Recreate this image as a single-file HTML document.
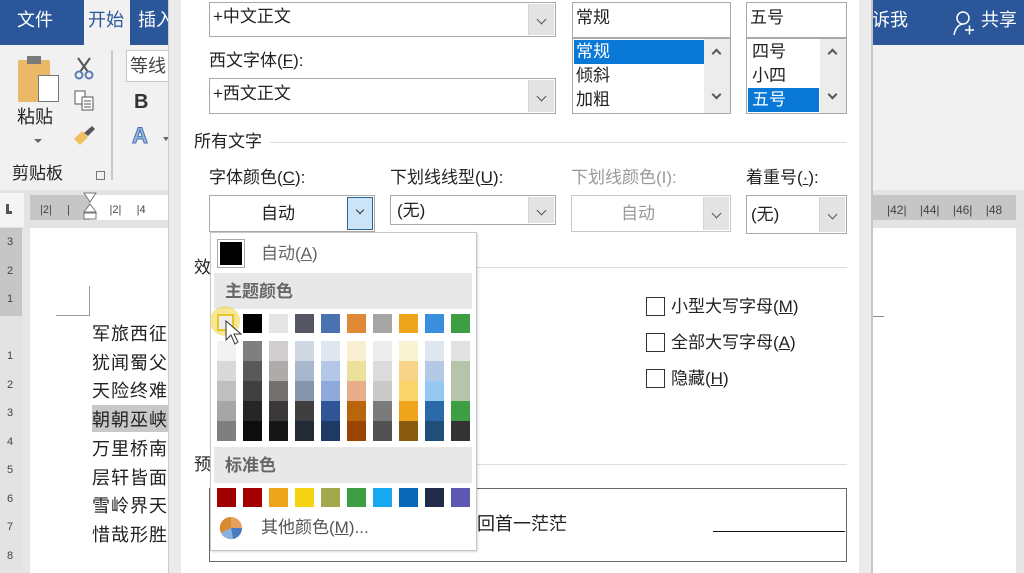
<!DOCTYPE html>
<html><head><meta charset="utf-8"><style>
*{margin:0;padding:0;box-sizing:border-box}
body{width:1024px;height:573px;overflow:hidden;position:relative;background:#e6e6e6;font-family:"Liberation Sans","Noto Sans CJK SC",sans-serif;color:#222}
.a{position:absolute}
.t{position:absolute;font-size:17px;line-height:20px;white-space:nowrap}
.box{position:absolute;background:#fff;border:1px solid #a9a9a9}
.dd{position:absolute;top:1px;bottom:1px;right:1px;width:26px;background:#e3e3e3;border-left:1px solid #d4d4d4}
.dd:after{content:"";position:absolute;left:9px;top:40%;width:6px;height:6px;border-right:1px solid #555;border-bottom:1px solid #555;transform:rotate(45deg)}
.sw{position:absolute;width:19px;height:19px}
.up{position:absolute;width:7px;height:7px;border-left:2px solid #555;border-top:2px solid #555;transform:rotate(45deg)}
.dn{position:absolute;width:7px;height:7px;border-right:2px solid #555;border-bottom:2px solid #555;transform:rotate(45deg)}
u{text-decoration:underline}
</style></head><body>
<!-- ribbon -->
<div class="a" style="left:0;top:0;width:1024px;height:45px;background:#2b579a"></div>
<div class="a" style="left:84px;top:0;width:46px;height:45px;background:#f1f1f1"></div>
<div class="t" style="left:17px;top:10px;color:#fff;font-size:18px">文件</div>
<div class="t" style="left:88px;top:10px;color:#2b579a;font-size:18px">开始</div>
<div class="t" style="left:138px;top:10px;color:#fff;font-size:18px">插入</div>
<div class="t" style="left:872px;top:10px;color:#fff;font-size:18px">诉我</div>
<svg class="a" style="left:952px;top:10px" width="24" height="26"><circle cx="11" cy="8" r="6" fill="none" stroke="#fff" stroke-width="1.5"/><path d="M2 25 Q4 15 11 14" fill="none" stroke="#fff" stroke-width="1.5"/><path d="M13 20h9M17.5 15.5v9" stroke="#fff" stroke-width="1.5"/></svg>
<div class="t" style="left:981px;top:10px;color:#fff;font-size:18px">共享</div>
<div class="a" style="left:0;top:45px;width:1024px;height:145px;background:#f1f1f1"></div>
<div class="a" style="left:18px;top:60px;width:32px;height:42px;background:#eab968;border-radius:2px"></div>
<div class="a" style="left:27px;top:56px;width:14px;height:8px;background:#7a7a7a"></div>
<div class="a" style="left:38px;top:75px;width:21px;height:27px;background:#fff;border:1px solid #777"></div>
<div class="t" style="left:17px;top:107px;font-size:18px">粘贴</div>
<div class="a" style="left:34px;top:139px;border:4px solid transparent;border-top:4px solid #666"></div>
<div class="t" style="left:12px;top:164px;font-size:17px">剪贴板</div>
<div class="a" style="left:96px;top:171px;width:9px;height:9px;border:1px solid #777"></div>
<svg class="a" style="left:73px;top:56px" width="22" height="24"><path d="M5 2 L15 16 M17 2 L7 16" stroke="#555" stroke-width="2"/><circle cx="6" cy="19" r="3.5" fill="none" stroke="#5a7db5" stroke-width="2"/><circle cx="16" cy="19" r="3.5" fill="none" stroke="#5a7db5" stroke-width="2"/></svg>
<svg class="a" style="left:74px;top:90px" width="22" height="22"><rect x="1" y="1" width="10" height="13" fill="#fff" stroke="#555"/><rect x="8" y="7" width="11" height="13" fill="#fff" stroke="#555"/><path d="M10 11h7M10 14h7M10 17h7" stroke="#555"/></svg>
<svg class="a" style="left:72px;top:125px" width="24" height="22"><path d="M2 14 L10 6 L16 12 L8 20Z" fill="#f0c060"/><path d="M12 8 L20 1 L23 4 L16 11Z" fill="#555"/></svg>
<div class="a" style="left:111px;top:50px;width:2px;height:130px;background:#c8c8c8"></div>
<div class="a" style="left:126px;top:50px;width:50px;height:32px;background:#fff;border:1px solid #c6c6c6"></div>
<div class="t" style="left:130px;top:56px;font-size:18px;color:#444">等线</div>
<div class="t" style="left:134px;top:92px;font-size:20px;font-weight:bold;color:#333">B</div>
<div class="t" style="left:132px;top:126px;font-size:22px;font-weight:bold;color:#9ab8e0;-webkit-text-stroke:1px #4a72b0">A</div>
<div class="a" style="left:163px;top:137px;border:3px solid transparent;border-top:4px solid #666"></div>
<!-- ruler area -->
<div class="a" style="left:0;top:190px;width:1024px;height:40px;background:#e3e3e3"></div>
<div class="a" style="left:0;top:193px;width:24px;height:34px;background:#f4f4f4"></div>
<div class="a" style="left:6px;top:204px;width:6px;height:10px;border-left:3px solid #555;border-bottom:3px solid #555"></div>
<div class="a" style="left:30px;top:195px;width:60px;height:25px;background:#c6c6c6"></div>
<div class="a" style="left:90px;top:195px;width:80px;height:25px;background:#fff"></div>
<div class="t" style="left:40px;top:200px;font-size:11px;color:#444">|2|&nbsp;&nbsp;&nbsp;&nbsp;&nbsp;|&nbsp;&nbsp;&nbsp;&nbsp;&nbsp;&nbsp;|&nbsp;&nbsp;&nbsp;&nbsp;&nbsp;&nbsp;|2|&nbsp;&nbsp;&nbsp;&nbsp;&nbsp;|4</div>
<svg class="a" style="left:83px;top:192px" width="14" height="36"><path d="M1 1h12L7 10Z M7 12 L13 20 H1Z" fill="#fff" stroke="#777"/><rect x="1" y="21" width="12" height="6" fill="#fff" stroke="#777"/></svg>
<div class="a" style="left:872px;top:195px;width:144px;height:25px;background:#c6c6c6"></div>
<div class="t" style="left:887px;top:200px;font-size:12px;color:#444">|42|&nbsp;&nbsp;&nbsp;&nbsp;|44|&nbsp;&nbsp;&nbsp;&nbsp;|46|&nbsp;&nbsp;&nbsp;&nbsp;|48</div>
<!-- left vertical ruler -->
<div class="a" style="left:0;top:228px;width:22px;height:345px;background:#e3e3e3"></div>
<div class="a" style="left:0;top:228px;width:22px;height:88px;background:#c6c6c6"></div>
<div class="a" style="left:3px;top:228px;font-size:11px;color:#444;line-height:28.5px;width:14px;text-align:center">3<br>2<br>1<br><br>1<br>2<br>3<br>4<br>5<br>6<br>7<br>8</div>
<!-- document page -->
<div class="a" style="left:30px;top:228px;width:140px;height:345px;background:#fff"></div>
<div class="a" style="left:56px;top:286px;width:34px;height:30px;border-right:1px solid #999;border-bottom:1px solid #999"></div>
<div class="a" style="left:92px;top:405px;width:76px;height:27px;background:#c8c8c8"></div>
<div class="a" style="left:92px;top:320px;font-size:18px;line-height:28.7px;color:#222;letter-spacing:1px">军旅西征<br>犹闻蜀父<br>天险终难<br>朝朝巫峡<br>万里桥南<br>层轩皆面<br>雪岭界天<br>惜哉形胜</div>
<div class="a" style="left:872px;top:228px;width:144px;height:345px;background:#fff"></div>
<div class="a" style="left:872px;top:316px;width:12px;height:1px;background:#888"></div>
<!-- dialog -->
<div class="a" style="left:168px;top:0;width:13px;height:573px;background:#ebebeb;border-left:1px solid #ccc"></div>
<div class="a" style="left:181px;top:0;width:678px;height:573px;background:#fff"></div>
<div class="a" style="left:859px;top:0;width:14px;height:573px;background:#ebebeb;border-right:2px solid #c6c6c6"></div>

<div class="box" style="left:209px;top:2px;width:347px;height:35px"><div class="dd"></div></div>
<div class="t" style="left:213px;top:7px">+中文正文</div>
<div class="t" style="left:209px;top:51px">西文字体(<u>F</u>):</div>
<div class="box" style="left:209px;top:78px;width:347px;height:36px"><div class="dd"></div></div>
<div class="t" style="left:213px;top:84px">+西文正文</div>

<div class="box" style="left:572px;top:2px;width:159px;height:36px"></div>
<div class="t" style="left:576px;top:8px">常规</div>
<div class="box" style="left:572px;top:38px;width:159px;height:76px"></div>
<div class="a" style="left:704px;top:39px;width:26px;height:74px;background:#ececec"></div>
<div class="a" style="left:574px;top:40px;width:130px;height:24px;background:#0a78d7"></div>
<div class="t" style="left:576px;top:42px;color:#fff">常规</div>
<div class="t" style="left:576px;top:66px">倾斜</div>
<div class="t" style="left:576px;top:90px">加粗</div>
<div class="up" style="left:713px;top:50px"></div>
<div class="dn" style="left:713px;top:91px"></div>

<div class="box" style="left:746px;top:2px;width:101px;height:36px"></div>
<div class="t" style="left:750px;top:8px">五号</div>
<div class="box" style="left:746px;top:38px;width:101px;height:76px"></div>
<div class="a" style="left:820px;top:39px;width:26px;height:74px;background:#ececec"></div>
<div class="a" style="left:748px;top:88px;width:71px;height:24px;background:#0a78d7"></div>
<div class="t" style="left:752px;top:42px">四号</div>
<div class="t" style="left:752px;top:66px">小四</div>
<div class="t" style="left:752px;top:90px;color:#fff">五号</div>
<div class="up" style="left:829px;top:50px"></div>
<div class="dn" style="left:829px;top:91px"></div>

<div class="t" style="left:194px;top:132px">所有文字</div>
<div class="a" style="left:270px;top:142px;width:577px;height:1px;background:#ddd"></div>
<div class="t" style="left:209px;top:168px">字体颜色(<u>C</u>):</div>
<div class="t" style="left:390px;top:168px">下划线线型(<u>U</u>):</div>
<div class="t" style="left:571px;top:168px;color:#999">下划线颜色(I):</div>
<div class="t" style="left:746px;top:168px">着重号(<u>·</u>):</div>

<div class="box" style="left:209px;top:195px;width:166px;height:37px"></div>
<div class="t" style="left:261px;top:204px">自动</div>
<div class="a" style="left:347px;top:197px;width:26px;height:33px;background:#cce4f7;border:1px solid #2c628b"></div>
<div class="a" style="left:357px;top:207px;width:6px;height:6px;border-right:1px solid #333;border-bottom:1px solid #333;transform:rotate(45deg)"></div>
<div class="box" style="left:390px;top:195px;width:166px;height:30px"><div class="dd"></div></div>
<div class="t" style="left:397px;top:201px">(无)</div>
<div class="box" style="left:571px;top:195px;width:160px;height:37px;border-color:#c8c8c8"><div class="dd"></div></div>
<div class="t" style="left:621px;top:204px;color:#999">自动</div>
<div class="box" style="left:746px;top:195px;width:101px;height:39px"><div class="dd"></div></div>
<div class="t" style="left:751px;top:205px">(无)</div>

<div class="t" style="left:194px;top:258px">效</div>
<div class="a" style="left:476px;top:267px;width:371px;height:1px;background:#ddd"></div>
<div class="a" style="left:646px;top:297px;width:19px;height:19px;border:1px solid #333"></div>
<div class="t" style="left:671px;top:297px">小型大写字母(<u>M</u>)</div>
<div class="a" style="left:646px;top:333px;width:19px;height:19px;border:1px solid #333"></div>
<div class="t" style="left:671px;top:333px">全部大写字母(<u>A</u>)</div>
<div class="a" style="left:646px;top:369px;width:19px;height:19px;border:1px solid #333"></div>
<div class="t" style="left:671px;top:369px">隐藏(<u>H</u>)</div>

<div class="t" style="left:194px;top:455px">预</div>
<div class="a" style="left:476px;top:464px;width:371px;height:1px;background:#ddd"></div>
<div class="a" style="left:209px;top:488px;width:638px;height:74px;border:1px solid #666;background:#fff"></div>
<div class="t" style="left:477px;top:514px;font-size:18px">回首一茫茫</div>
<div class="a" style="left:713px;top:531px;width:132px;height:1px;background:#111"></div>

<!-- color popup -->
<div class="a" style="left:210px;top:232px;width:267px;height:319px;background:#fff;border:1px solid #c6c6c6;box-shadow:1px 1px 2px rgba(0,0,0,.15)"></div>
<div class="a" style="left:217px;top:239px;width:28px;height:29px;border:1px solid #aaa;background:#fff"></div>
<div class="a" style="left:220px;top:242px;width:22px;height:23px;background:#000"></div>
<div class="t" style="left:261px;top:244px;color:#666">自动(<u>A</u>)</div>
<div class="a" style="left:214px;top:273px;width:258px;height:36px;background:#e8e8e8"></div>
<div class="t" style="left:225px;top:282px;font-weight:bold;color:#666">主题颜色</div>
<div class="a" style="left:214px;top:447px;width:258px;height:36px;background:#e8e8e8"></div>
<div class="t" style="left:225px;top:456px;font-weight:bold;color:#666">标准色</div>
<div id="g"></div>
<div class="a" style="left:210px;top:306px;width:30px;height:30px;border-radius:50%;background:rgba(240,215,80,.6)"></div>
<div class="a" style="left:217px;top:314px;width:17px;height:17px;border:2px solid #e8c820;background:#eee"></div>
<svg class="a" style="left:225px;top:320px" width="20" height="30"><path d="M1 1 L1 20 L6 15 L10 24 L13 22 L9 14 L16 14 Z" fill="#fff" stroke="#333"/></svg>
<svg class="a" style="left:219px;top:516px" width="24" height="24"><path d="M12 12 L12 1 A11 11 0 0 1 23 12Z" fill="#e8a060"/><path d="M12 12 L23 12 A11 11 0 0 1 14 23Z" fill="#4a7ac0"/><path d="M12 12 L14 23 A11 11 0 0 1 2 17Z" fill="#8ab0e0"/><path d="M12 12 L2 17 A11 11 0 0 1 12 1Z" fill="#d88a30"/></svg>
<div class="t" style="left:261px;top:518px;color:#555">其他颜色(<u>M</u>)...</div>
<script>
var tc=["#f4f4f4","#000000","#e5e5e5","#545763","#4a72b0","#e08a37","#a5a5a5","#eea41b","#3a8ede","#3e9e43"];
var sh=[["#f2f2f2","#d9d9d9","#bfbfbf","#a6a6a6","#7f7f7f"],["#7f7f7f","#595959","#404040","#262626","#0d0d0d"],["#d0cece","#aeabab","#757070","#3a3838","#171616"],["#d0d8e4","#a8b7cc","#8595ab","#3f3f3f","#222a35"],["#dde6f1","#b4c7e7","#8eaadb","#2f5597","#1f3864"],["#f8f0d0","#ebe19a","#e8ad8a","#b8650c","#9a4400"],["#ededed","#dbdbdb","#c9c9c9","#7b7b7b","#525252"],["#f8f3d3","#f7d48a","#fbd56a","#eea41b","#8a5a10"],["#dfe6ef","#b3c9e6","#95c9f2","#2a6aaa","#1f4e79"],["#e2e2e2","#b6c4ac","#b6c4ac","#3e9e43","#333333"]];
var st=["#a10000","#a50000","#eea41b","#f5d312","#a3a74e","#3e9e43","#16a9f0","#0867b6","#222a4a","#5e58b3"];
var h="";
for(var i=0;i<10;i++){var x=217+26*i;
h+='<div class="sw" style="left:'+x+'px;top:314px;background:'+tc[i]+'"></div>';
for(var j=0;j<5;j++)h+='<div class="sw" style="left:'+x+'px;top:'+(341+20*j)+'px;height:20px;background:'+sh[i][j]+'"></div>';
h+='<div class="sw" style="left:'+x+'px;top:488px;background:'+st[i]+'"></div>';}
document.getElementById("g").innerHTML=h;
</script>
</body></html>
